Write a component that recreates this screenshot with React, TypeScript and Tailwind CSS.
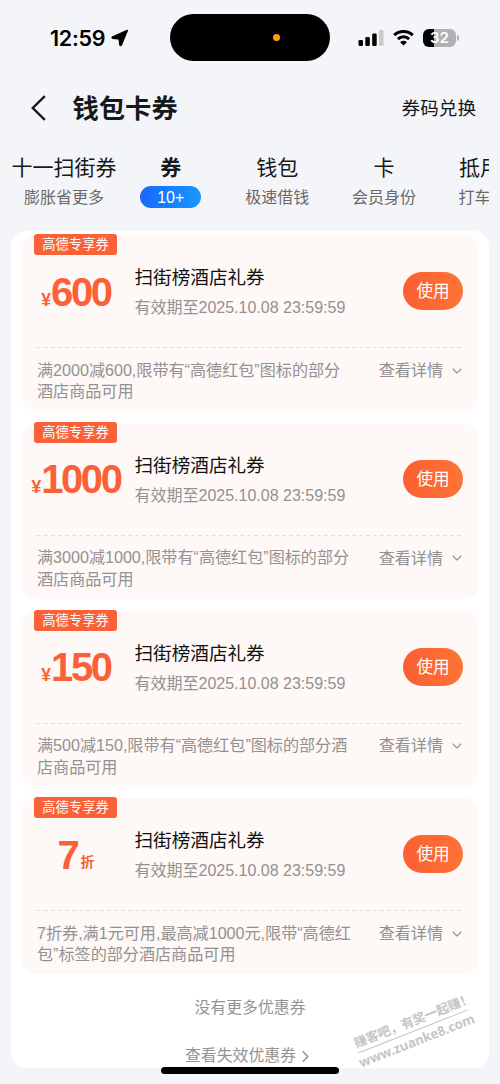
import { ChevronDown, ChevronRight } from "lucide-react";
import clsx from "clsx";

interface Tab {
  title: string;
  subtitle: string;
  active?: boolean;
}

interface Coupon {
  id: number;
  prefix?: string;
  amount: string;
  suffix?: string;
  terms: string[];
}

const tabs: Tab[] = [
  { title: "十一扫街券", subtitle: "膨胀省更多" },
  { title: "券", subtitle: "10+", active: true },
  { title: "钱包", subtitle: "极速借钱" },
  { title: "卡", subtitle: "会员身份" },
  { title: "抵用券", subtitle: "打车优惠" },
];

const coupons: Coupon[] = [
  { id: 1, prefix: "¥", amount: "600", terms: ["满2000减600,限带有“高德红包”图标的部分", "酒店商品可用"] },
  { id: 2, prefix: "¥", amount: "1000", terms: ["满3000减1000,限带有“高德红包”图标的部分", "酒店商品可用"] },
  { id: 3, prefix: "¥", amount: "150", terms: ["满500减150,限带有“高德红包”图标的部分酒", "店商品可用"] },
  { id: 4, amount: "7", suffix: "折", terms: ["7折券,满1元可用,最高减1000元,限带“高德红", "包”标签的部分酒店商品可用"] },
];

function StatusBar() {
  return (
    <div className="flex h-[75px] items-center">
      <div className="flex w-[170px] items-center gap-[6px] pl-[50px]">
        <span className="font-['Inter'] text-[21.5px] leading-6 font-semibold tracking-[-0.3px] text-black">12:59</span>
        <svg className="h-[18px] w-[18px]" viewBox="0 0 18 18">
          <path
            d="M16.3 1.5 10.3 15.9Q9.6 17 8.9 15.9L8.3 10.7Q8.2 9.9 7.4 9.8L1.7 9.2Q.6 8.6 1.7 7.9Z"
            fill="#000"
            stroke="#000"
            strokeWidth="1.5"
            strokeLinejoin="round"
          />
        </svg>
      </div>
      <div className="flex h-[47px] w-40 items-center rounded-full bg-black pl-[103px]">
        <span className="h-[7px] w-[7px] rounded-full bg-[#fb9a14]" />
      </div>
      <div className="flex items-center pl-7">
        <svg className="h-4 w-[26px]" viewBox="0 0 26 16">
          <rect x="0.5" y="10" width="4.5" height="6" rx="1.3" fill="#000" />
          <rect x="7.3" y="7" width="4.5" height="9" rx="1.3" fill="#000" />
          <rect x="14.2" y="3.5" width="4.5" height="12.5" rx="1.3" fill="#000" />
          <rect x="21" y="0" width="4.5" height="16" rx="1.3" fill="#c9cacc" />
        </svg>
        <svg className="ml-2 h-[17px] w-[23px]" viewBox="0 0 23 17">
          <path d="M2.2 6.2a13.4 13.4 0 0 1 18.6 0" fill="none" stroke="#000" strokeWidth="3" />
          <path d="M5.9 10.1a8 8 0 0 1 11.2 0" fill="none" stroke="#000" strokeWidth="2.9" />
          <path d="M11.5 16.6 8.1 13.2a4.9 4.9 0 0 1 6.8 0Z" fill="#000" />
        </svg>
        <div className="ml-2 flex h-[18px] w-[33px] items-center justify-center rounded-md bg-linear-to-r from-black from-32% to-[#b0b1b2] to-32%">
          <span className="font-['Inter'] text-[15px] leading-none font-semibold text-white">32</span>
        </div>
        <span className="ml-px h-1.5 w-[2px] rounded-r-full bg-[#b0b1b2]" />
      </div>
    </div>
  );
}

function Header() {
  return (
    <div className="flex h-16 items-center pt-px pr-6 pl-[30px]">
      <svg className="h-[26px] w-4" viewBox="0 0 16 26" fill="none" stroke="#17181a" strokeWidth="2.4">
        <path d="M14.8 1.2 2.8 13l12 11.8" />
      </svg>
      <h1 className="ml-[26.5px] pt-0.5 text-[26.3px] leading-8 font-bold">钱包卡券</h1>
      <span className="ml-auto pt-0.5 text-[18.6px] leading-6">券码兑换</span>
    </div>
  );
}

function TabBar() {
  return (
    <div className="mx-[11px] flex h-[92px] overflow-hidden pt-[15px]">
      {tabs.map((tab) => (
        <div key={tab.title} className="-ml-[0.4px] flex w-[107px] shrink-0 flex-col items-center whitespace-nowrap">
          <span className={clsx("text-[21px] leading-7", tab.active && "font-bold")}>{tab.title}</span>
          <span
            className={clsx(
              "mt-1 h-[22px] text-[16px]",
              tab.active
                ? "w-[61px] rounded-full bg-linear-to-r from-[#1c66fb] to-[#1b97ff] text-center leading-[23px] text-white"
                : "leading-6 text-[#68696c]"
            )}
          >
            {tab.subtitle}
          </span>
        </div>
      ))}
    </div>
  );
}

function CouponCard({ coupon }: { coupon: Coupon }) {
  return (
    <div className="relative h-44 rounded-[14px] bg-[#fef8f6] px-[15px]">
      <span className="absolute -top-px left-3 h-[21px] w-[83px] rounded-[3px] bg-[#fa6138] text-center text-[13.3px] leading-[22px] text-white">
        高德专享券
      </span>

      <div className="flex h-28 items-center">
        <div className="-ml-[7px] flex w-[92px] items-baseline justify-center pt-px font-bold text-[#fa6138]">
          {coupon.prefix && <span className="text-[17.5px]">{coupon.prefix}</span>}
          <span className="text-[40px] leading-[44px] tracking-[-2.4px]">{coupon.amount}</span>
          {coupon.suffix && <span className="relative -top-0.5 ml-[3px] text-[14px]">{coupon.suffix}</span>}
        </div>
        <div className="ml-[12.5px] flex flex-col gap-[5px] pt-[3px]">
          <span className="text-[18.6px] leading-[26px] text-[#111]">扫街榜酒店礼券</span>
          <span className="text-[16px] leading-6 text-[#939191]">有效期至2025.10.08 23:59:59</span>
        </div>
        <button className="ml-auto h-[38px] w-[60px] rounded-full bg-linear-to-r from-[#fb5e33] to-[#fd7435] text-[16.6px] leading-[39px] text-white">
          使用
        </button>
      </div>

      {/* Dashed divider */}
      <svg className="block h-px w-full">
        <line x1="0" y1="0.5" x2="100%" y2="0.5" stroke="#e3dbd9" strokeDasharray="4 3" />
      </svg>

      <div className="flex justify-between pt-[11.5px] text-[16.1px] leading-[21.5px] text-[#939191]">
        <p className="whitespace-nowrap">
          {coupon.terms.map((line) => (
            <span key={line} className="block">
              {line}
            </span>
          ))}
        </p>
        <div className="-mr-px flex h-[22px] items-center gap-[6px]">
          查看详情
          <ChevronDown className="-mr-px h-4 w-4" strokeWidth={1.6} />
        </div>
      </div>
    </div>
  );
}

function Watermark() {
  return (
    <div className="absolute top-[781px] left-[343px] flex w-[118px] -rotate-[21.5deg] flex-col items-center gap-px font-bold whitespace-nowrap text-[#c5c5c5]">
      <div className="w-full border-b border-[#c5c5c5] text-[12.8px] leading-[19px] tracking-[-0.2px]">赚客吧，有奖一起赚！</div>
      <div className="font-['Noto_Sans'] text-[13.1px] leading-[17px]">www.zuanke8.com</div>
    </div>
  );
}

export default function App() {
  return (
    <div className="relative h-[1084px] w-[500px] overflow-hidden bg-[#f4f5f8] font-['Liberation_Sans','Noto_Sans_CJK_SC',sans-serif] text-[#17181a]">
      <StatusBar />
      <Header />
      <TabBar />

      <div className="relative mx-[11px] h-[837px] rounded-[15px] bg-white px-[11px] pt-1">
        <div className="flex flex-col gap-[11.75px]">
          {coupons.map((coupon) => (
            <CouponCard key={coupon.id} coupon={coupon} />
          ))}
        </div>
        <p className="mt-[22px] text-center text-[15.9px] leading-6 text-[#939395]">没有更多优惠券</p>
        <div className="mt-6 flex items-center justify-center text-[15.9px] leading-6 text-[#939395]">
          查看失效优惠券
          <ChevronRight className="h-[19px] w-[19px]" strokeWidth={2} />
        </div>
        <Watermark />
      </div>

      {/* Home indicator */}
      <div className="absolute bottom-[10px] left-[161px] h-[7px] w-[178px] rounded-full bg-black" />
    </div>
  );
}
